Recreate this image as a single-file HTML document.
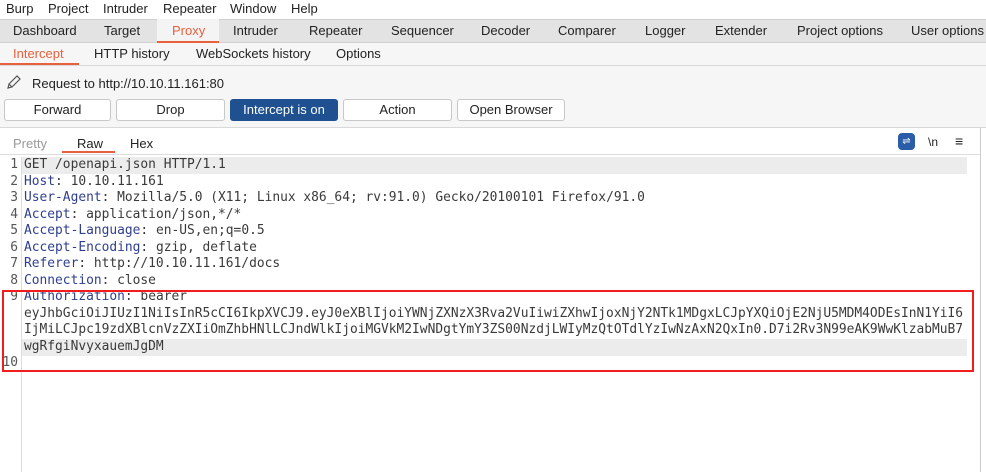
<!DOCTYPE html>
<html><head><meta charset="utf-8"><style>
*{margin:0;padding:0;box-sizing:border-box}
body{width:986px;height:472px;overflow:hidden;background:#fff;font-family:"Liberation Sans","DejaVu Sans",sans-serif;font-size:13px;color:#222;position:relative}
.abs{position:absolute;white-space:nowrap}
#menu{top:0;left:0;width:986px;height:19px;background:#fff}
#tabs{top:19px;left:0;width:986px;height:24px;background:#e3e3e3;border-top:1px solid #d0d0d0;border-bottom:1px solid #d0d0d0}
#sub{top:43px;left:0;width:986px;height:23px;background:#f6f6f6;border-bottom:1px solid #d8d8d8}
#tool{top:66px;left:0;width:986px;height:62px;background:#f6f6f6;border-bottom:1px solid #d8d8d8}
.btn{position:absolute;top:99px;height:22px;border:1px solid #c8c8c8;border-radius:3px;background:#fff;text-align:center;line-height:20px;font-size:13px}
.code{font-family:"DejaVu Sans Mono","Liberation Mono",monospace;font-size:12.9px;position:absolute;left:24px;white-space:pre;color:#3a3a3a}
.k{color:#2f3f8f}
.ln{font-family:"DejaVu Sans Mono",monospace;font-size:12.9px;position:absolute;color:#555;width:18px;text-align:right;left:0}
</style></head><body>
<div class="abs" id="menu"></div>
<div class="abs" style="top:1px;left:6px">Burp</div>
<div class="abs" style="top:1px;left:48px">Project</div>
<div class="abs" style="top:1px;left:103px">Intruder</div>
<div class="abs" style="top:1px;left:163px">Repeater</div>
<div class="abs" style="top:1px;left:230px">Window</div>
<div class="abs" style="top:1px;left:291px">Help</div>
<div class="abs" id="tabs"></div>
<div class="abs" style="top:19px;left:157px;width:62px;height:24px;background:#f4f4f4;border-bottom:2px solid #e8603c"></div>
<div class="abs" style="top:23px;left:13px">Dashboard</div>
<div class="abs" style="top:23px;left:104px">Target</div>
<div class="abs" style="top:23px;left:172px;color:#e8603c">Proxy</div>
<div class="abs" style="top:23px;left:233px">Intruder</div>
<div class="abs" style="top:23px;left:309px">Repeater</div>
<div class="abs" style="top:23px;left:391px">Sequencer</div>
<div class="abs" style="top:23px;left:481px">Decoder</div>
<div class="abs" style="top:23px;left:558px">Comparer</div>
<div class="abs" style="top:23px;left:645px">Logger</div>
<div class="abs" style="top:23px;left:715px">Extender</div>
<div class="abs" style="top:23px;left:797px">Project options</div>
<div class="abs" style="top:23px;left:911px">User options</div>
<div class="abs" id="sub"></div>
<div class="abs" style="top:63px;left:0;width:79px;height:2px;background:#e8603c"></div>
<div class="abs" style="top:46px;left:13px;color:#e8603c">Intercept</div>
<div class="abs" style="top:46px;left:94px">HTTP history</div>
<div class="abs" style="top:46px;left:196px">WebSockets history</div>
<div class="abs" style="top:46px;left:336px">Options</div>
<div class="abs" id="tool"></div>
<svg class="abs" style="top:74px;left:6px" width="16" height="16" viewBox="0 0 16 16"><path d="M2 14 L3 10 L11 2 L14 5 L6 13 Z M3 10 L6 13" fill="none" stroke="#555" stroke-width="1.2"/></svg>
<div class="abs" style="top:76px;left:32px">Request to http://10.10.11.161:80</div>
<div class="btn" style="left:4px;width:107px">Forward</div>
<div class="btn" style="left:116px;width:109px">Drop</div>
<div class="btn" style="left:230px;width:108px;background:#1f5190;border-color:#1f5190;color:#fff">Intercept is on</div>
<div class="btn" style="left:343px;width:109px">Action</div>
<div class="btn" style="left:457px;width:108px">Open Browser</div>
<div class="abs" style="top:128px;left:0;width:981px;height:27px;background:#fff;border-bottom:1px solid #ddd"></div>
<div class="abs" style="top:136px;left:13px;color:#999">Pretty</div>
<div class="abs" style="top:136px;left:77px">Raw</div>
<div class="abs" style="top:151px;left:62px;width:53px;height:2px;background:#e8603c"></div>
<div class="abs" style="top:136px;left:130px">Hex</div>
<div class="abs" style="top:133px;left:898px;width:17px;height:17px;background:#2a5ca8;border-radius:4px;color:#fff;font-size:10px;text-align:center;line-height:17px">⇌</div>
<div class="abs" style="top:135px;left:928px;font-size:12px">\n</div>
<div class="abs" style="top:133px;left:955px;font-size:14px">≡</div>
<div class="abs" style="top:128px;left:980px;width:1px;height:344px;background:#ccc"></div>
<div class="abs" style="top:157px;left:21px;width:1px;height:315px;background:#ddd"></div>
<div class="abs" style="top:157px;left:22px;width:945px;height:17px;background:#ececec"></div>
<div class="abs" style="top:339px;left:22px;width:945px;height:17px;background:#ececec"></div>
<div class="ln" style="top:157px">1</div><div class="ln" style="top:174px">2</div><div class="ln" style="top:190px">3</div><div class="ln" style="top:207px">4</div><div class="ln" style="top:223px">5</div><div class="ln" style="top:240px">6</div><div class="ln" style="top:256px">7</div><div class="ln" style="top:273px">8</div><div class="ln" style="top:289px">9</div><div class="ln" style="top:355px">10</div>
<div class="code" style="top:157px">GET /openapi.json HTTP/1.1</div>
<div class="code" style="top:174px"><span class="k">Host</span>: 10.10.11.161</div>
<div class="code" style="top:190px"><span class="k">User-Agent</span>: Mozilla/5.0 (X11; Linux x86_64; rv:91.0) Gecko/20100101 Firefox/91.0</div>
<div class="code" style="top:207px"><span class="k">Accept</span>: application/json,*/*</div>
<div class="code" style="top:223px"><span class="k">Accept-Language</span>: en-US,en;q=0.5</div>
<div class="code" style="top:240px"><span class="k">Accept-Encoding</span>: gzip, deflate</div>
<div class="code" style="top:256px"><span class="k">Referer</span>: http://10.10.11.161/docs</div>
<div class="code" style="top:273px"><span class="k">Connection</span>: close</div>
<div class="code" style="top:289px"><span class="k">Authorization</span>: bearer</div>
<div class="code" style="top:306px">eyJhbGciOiJIUzI1NiIsInR5cCI6IkpXVCJ9.eyJ0eXBlIjoiYWNjZXNzX3Rva2VuIiwiZXhwIjoxNjY2NTk1MDgxLCJpYXQiOjE2NjU5MDM4ODEsInN1YiI6</div>
<div class="code" style="top:322px">IjMiLCJpc19zdXBlcnVzZXIiOmZhbHNlLCJndWlkIjoiMGVkM2IwNDgtYmY3ZS00NzdjLWIyMzQtOTdlYzIwNzAxN2QxIn0.D7i2Rv3N99eAK9WwKlzabMuB7</div>
<div class="code" style="top:339px">wgRfgiNvyxauemJgDM</div>
<div class="abs" style="top:290px;left:2px;width:972px;height:82px;border:2px solid #f21c1c"></div>
</body></html>
